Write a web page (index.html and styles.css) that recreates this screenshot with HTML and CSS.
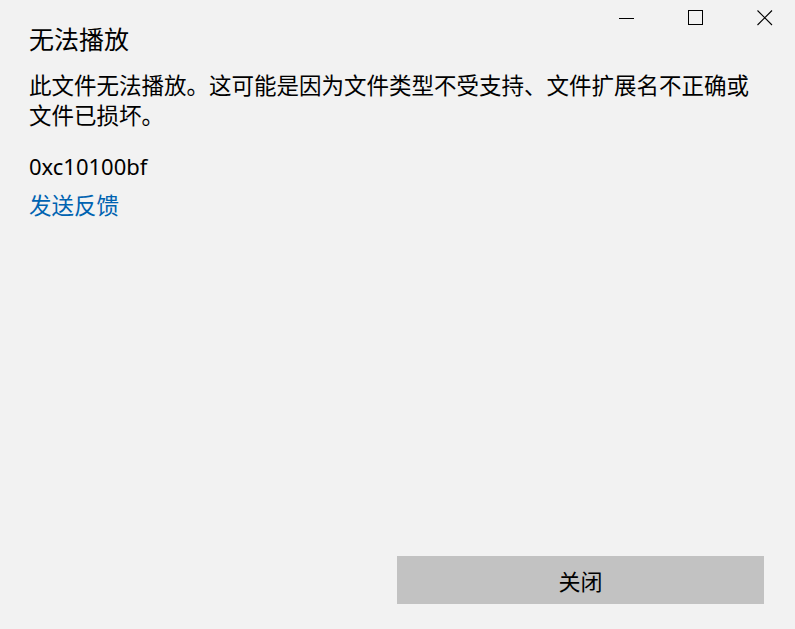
FILE: index.html
```html
<!DOCTYPE html>
<html lang="zh-CN">
<head>
<meta charset="utf-8">
<title>无法播放</title>
<link rel="stylesheet" href="styles.css">
</head>
<body>
<div class="window">
  <div class="caption">
    <div class="cap-btn">
      <svg width="16" height="16" viewBox="0 0 16 16"><path d="M0 8.5H15" stroke="#000" stroke-width="1" fill="none"/></svg>
    </div>
    <div class="cap-btn">
      <svg width="16" height="16" viewBox="0 0 16 16"><rect x="0.5" y="0.5" width="14" height="14" stroke="#000" stroke-width="1" fill="none"/></svg>
    </div>
    <div class="cap-btn">
      <svg width="16" height="16" viewBox="0 0 16 16"><path d="M0.5 0.5L15 15M15 0.5L0.5 15" stroke="#000" stroke-width="1.1" fill="none"/></svg>
    </div>
  </div>
  <main class="content">
    <h1 class="title">无法播放</h1>
    <p class="message">此文件无法播放。这可能是因为文件类型不受支持、文件扩展名不正确或文件已损坏。</p>
    <p class="code">0xc10100bf</p>
    <a class="feedback" href="#">发送反馈</a>
  </main>
  <footer class="footer">
    <button class="close-btn" type="button">关闭</button>
  </footer>
</div>
</body>
</html>
```

FILE: styles.css
```css
html, body {
  margin: 0;
  padding: 0;
  height: 100%;
}
body {
  background: #f2f2f2;
  color: #000;
  font-family: "Noto Sans", "Noto Sans CJK SC", sans-serif;
  overflow: hidden;
}
.window {
  position: relative;
  height: 629px;
  display: flex;
  flex-direction: column;
}
.caption {
  position: absolute;
  top: 0;
  right: -4px;
  display: flex;
}
.cap-btn {
  width: 69px;
  height: 35px;
  display: flex;
  align-items: flex-start;
  justify-content: center;
  padding-top: 10px;
  box-sizing: border-box;
}
.cap-btn svg {
  display: block;
}
.content {
  padding: 21px 29px 0 29px;
  display: flex;
  flex-direction: column;
  align-items: flex-start;
}
.title {
  margin: 0;
  font-family: "Noto Sans CJK SC", sans-serif;
  font-size: 25px;
  font-weight: 400;
  line-height: 34px;
}
.message {
  margin: 14px 0 0 0;
  font-family: "Noto Sans CJK SC", sans-serif;
  font-size: 22.5px;
  line-height: 30px;
  width: 737px;
}
.code {
  margin: 22px 0 0 0;
  font-size: 22px;
  line-height: 30px;
}
.feedback {
  margin-top: 8px;
  font-family: "Noto Sans CJK SC", sans-serif;
  font-size: 22.5px;
  line-height: 30px;
  color: #0063b1;
  text-decoration: none;
}
.footer {
  margin-top: auto;
  display: flex;
  justify-content: flex-end;
  padding: 0 31px 25px 0;
}
.close-btn {
  width: 367px;
  height: 48px;
  border: none;
  background: #c2c2c2;
  color: #000;
  font-family: "Noto Sans CJK SC", sans-serif;
  font-size: 22px;
  padding: 0;
  margin: 0;
}
```
